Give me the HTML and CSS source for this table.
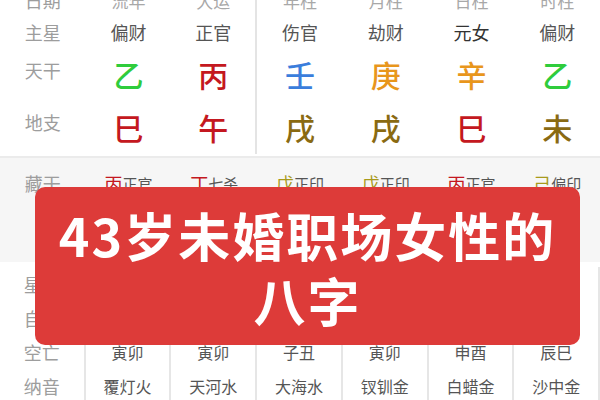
FILE: index.html
```html
<!DOCTYPE html>
<html lang="zh-CN">
<head>
<meta charset="utf-8">
<title>八字</title>
<link rel="stylesheet" href="styles.css">
</head>
<body>
<div class="page">
  <section class="top">
    <div class="row head">
      <div class="cell lbl">日期</div>
      <div class="cell">流年</div>
      <div class="cell div">大运</div>
      <div class="cell">年柱</div>
      <div class="cell">月柱</div>
      <div class="cell">日柱</div>
      <div class="cell">时柱</div>
    </div>
    <div class="row star">
      <div class="cell lbl">主星</div>
      <div class="cell">偏财</div>
      <div class="cell div">正官</div>
      <div class="cell">伤官</div>
      <div class="cell">劫财</div>
      <div class="cell dm">元女</div>
      <div class="cell">偏财</div>
    </div>
    <div class="row big gan">
      <div class="cell lbl">天干</div>
      <div class="cell wood">乙</div>
      <div class="cell div fire">丙</div>
      <div class="cell water">壬</div>
      <div class="cell metal">庚</div>
      <div class="cell metal">辛</div>
      <div class="cell wood">乙</div>
    </div>
    <div class="row big zhi">
      <div class="cell lbl">地支</div>
      <div class="cell fire">巳</div>
      <div class="cell div fire">午</div>
      <div class="cell earth">戌</div>
      <div class="cell earth">戌</div>
      <div class="cell fire">巳</div>
      <div class="cell earth">未</div>
    </div>
  </section>

  <section class="cang">
    <div class="row hidden">
      <div class="cell lbl">藏干</div>
      <div class="cell"><span class="stem fire">丙</span><span class="god">正官</span></div>
      <div class="cell"><span class="stem fire">丁</span><span class="god">七杀</span></div>
      <div class="cell"><span class="stem soil">戊</span><span class="god">正印</span></div>
      <div class="cell"><span class="stem soil">戊</span><span class="god">正印</span></div>
      <div class="cell"><span class="stem fire">丙</span><span class="god">正官</span></div>
      <div class="cell"><span class="stem soil">己</span><span class="god">偏印</span></div>
    </div>
  </section>

  <section class="bottom">
    <div class="row small">
      <div class="cell lbl">星运</div>
      <div class="cell"></div>
      <div class="cell"></div>
      <div class="cell"></div>
      <div class="cell"></div>
      <div class="cell"></div>
      <div class="cell"></div>
    </div>
    <div class="row small">
      <div class="cell lbl">自坐</div>
      <div class="cell"></div>
      <div class="cell"></div>
      <div class="cell"></div>
      <div class="cell"></div>
      <div class="cell"></div>
      <div class="cell"></div>
    </div>
    <div class="row small">
      <div class="cell lbl">空亡</div>
      <div class="cell">寅卯</div>
      <div class="cell">寅卯</div>
      <div class="cell">子丑</div>
      <div class="cell">寅卯</div>
      <div class="cell">申酉</div>
      <div class="cell">辰巳</div>
    </div>
    <div class="row small">
      <div class="cell lbl">纳音</div>
      <div class="cell">覆灯火</div>
      <div class="cell">天河水</div>
      <div class="cell">大海水</div>
      <div class="cell">钗钏金</div>
      <div class="cell">白蜡金</div>
      <div class="cell">沙中金</div>
    </div>
  </section>
</div>

<div class="banner">
  <p class="banner-line">43岁未婚职场女性的</p>
  <p class="banner-line">八字</p>
</div>
</body>
</html>
```

FILE: styles.css
```css
* { box-sizing: border-box; }

html, body {
  margin: 0;
  padding: 0;
  width: 600px;
  height: 400px;
  overflow: hidden;
  background: #ffffff;
  font-family: "Noto Sans CJK SC", "Noto Sans", sans-serif;
}

.page {
  margin-top: -16px;
}

.row {
  display: grid;
  grid-template-columns: repeat(7, 1fr);
}

.cell {
  display: flex;
  align-items: center;
  justify-content: center;
  white-space: nowrap;
}

.lbl {
  color: #9d9d9d;
  font-size: 18px;
}

/* top section */
.top .div {
  border-right: 2px solid #e4e4e4;
}

.head {
  height: 32px;
  color: #a8a8a8;
  font-size: 17px;
}

.star {
  height: 32px;
  color: #555555;
  font-size: 18px;
}

.star .dm {
  color: #333333;
}

.big {
  font-size: 30px;
  font-weight: 500;
}

.gan { height: 52px; }
.zhi { height: 54px; }

.big .lbl {
  align-items: flex-start;
  padding-top: 12px;
  font-size: 18px;
  font-weight: 400;
  line-height: 20px;
}

.wood  { color: #2fcc3c; }
.fire  { color: #c41820; }
.water { color: #3a7ddc; }
.metal { color: #e8961c; }
.earth { color: #8a6a12; }
.soil  { color: #a89a1c; }

/* hidden stems */
.cang {
  margin-top: 2px;
  border-top: 2px solid #ebebeb;
  background: #f6f6f6;
  height: 106px;
}

.hidden {
  height: 50px;
}

.stem {
  font-size: 18px;
}

.god {
  font-size: 15px;
  color: #555555;
}

/* bottom section */
.bottom {
  padding-top: 5px;
}

.small {
  height: 34px;
  font-size: 16px;
  color: #555555;
}

.small .lbl {
  font-size: 18px;
}

.small .cell {
  border-right: 2px solid #e6e6e6;
}

/* overlay banner */
.banner {
  position: absolute;
  left: 35px;
  top: 187px;
  width: 545px;
  height: 158px;
  border-radius: 10px;
  background: #dd3b39;
  padding-top: 15px;
  text-align: center;
}

.banner-line {
  margin: 0;
  color: #ffffff;
  font-size: 52px;
  font-weight: 700;
  line-height: 65px;
  letter-spacing: 2px;
  white-space: nowrap;
}
```
